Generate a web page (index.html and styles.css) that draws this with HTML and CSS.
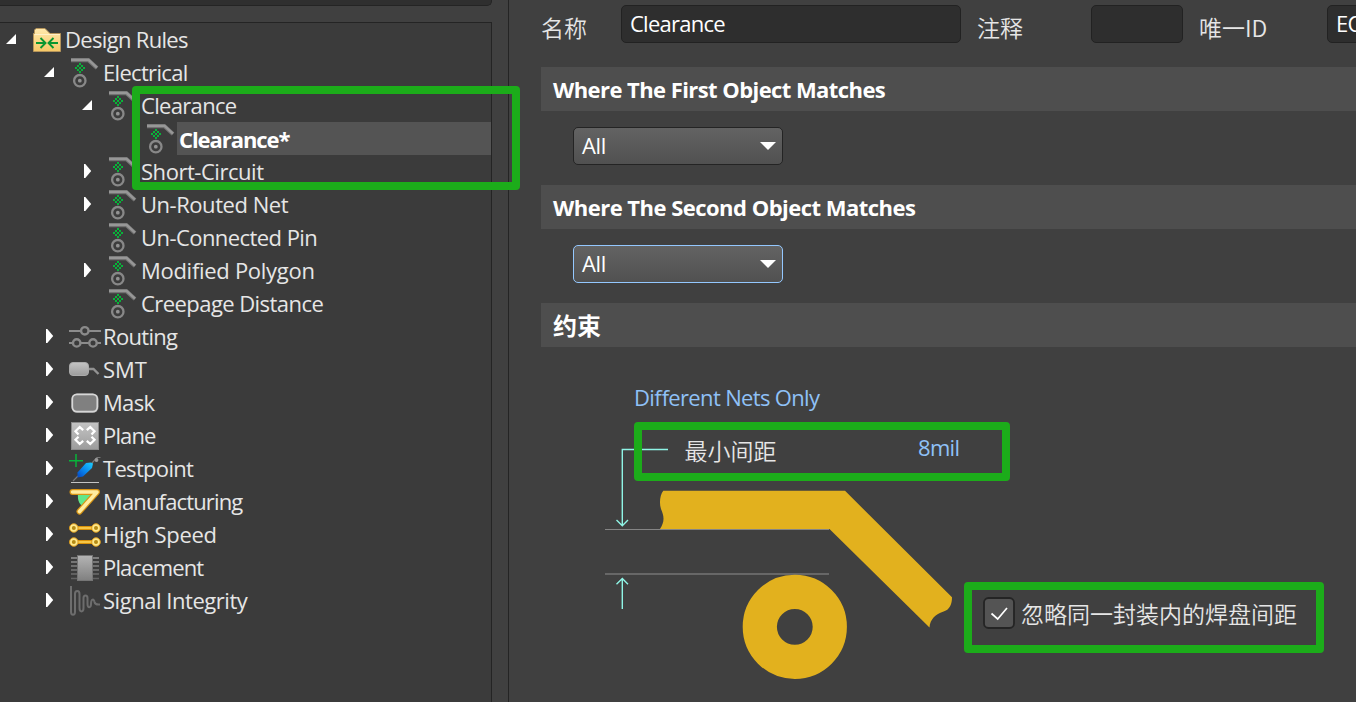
FILE: index.html
```
<!DOCTYPE html>
<html lang="zh-CN">
<head>
<meta charset="utf-8">
<title>Design Rules</title>
<link rel="stylesheet" href="styles.css">
</head>
<body>
<svg class="defs" width="0" height="0">
  <defs>
    <linearGradient id="gold" x1="0" y1="0" x2="0" y2="1"><stop offset="0" stop-color="#ffe9ae"/><stop offset="1" stop-color="#f6c866"/></linearGradient>
    <linearGradient id="grey" x1="0" y1="0" x2="0" y2="1"><stop offset="0" stop-color="#c4c4c4"/><stop offset="1" stop-color="#9c9c9c"/></linearGradient>
    <linearGradient id="dim" x1="0" y1="0" x2="0" y2="1"><stop offset="0" stop-color="#b4b4b4"/><stop offset="1" stop-color="#808080"/></linearGradient>
    <linearGradient id="pins" gradientUnits="userSpaceOnUse" x1="0" y1="4" x2="0" y2="30"><stop offset="0" stop-color="#9a9a9a"/><stop offset="1" stop-color="#5c5c5c"/></linearGradient>
    <linearGradient id="blue" x1="1" y1="0" x2="0" y2="1"><stop offset="0" stop-color="#1ed0ff"/><stop offset=".5" stop-color="#0a8cf0"/><stop offset="1" stop-color="#0546c4"/></linearGradient>
    <symbol id="open" viewBox="0 0 26 33"><path d="M1 21L11 11V21Z" fill="#fff"/></symbol>
    <symbol id="closed" viewBox="0 0 26 33"><path d="M3 9H4.3L10.2 16L4.3 23H3Z" fill="#fff"/></symbol>
    <symbol id="folder" viewBox="0 0 32 33">
      <path d="M2.5 28.500V10.500H3.500V7L5 5.500H14L19 10.500H29.500V28.500Z" fill="url(#gold)" stroke="#b5945a"/>
      <path d="M3.500 11.500H29" stroke="#fff0c8"/>
      <path d="M5 20H14M9.500 15L14.500 20L9.500 25M27 20H18M22.500 15L17.500 20L22.500 25" fill="none" stroke="#0a9630" stroke-width="1.900"/>
    </symbol>
    <symbol id="rule" viewBox="0 0 32 33">
      <path d="M2 4.200H19.500L28 12" fill="none" stroke="#727272" stroke-width="4"/>
      <path d="M2 3.800H19.500L28 11.600" fill="none" stroke="#979797" stroke-width="2.400"/>
      <g fill="#08b43a"><rect x="10" y="7" width="2" height="2"/><rect x="8" y="9" width="2" height="2"/><rect x="12" y="9" width="2" height="2"/><rect x="6" y="11" width="2" height="2"/><rect x="10" y="11" width="2" height="2"/><rect x="14" y="11" width="2" height="2"/><rect x="8" y="13" width="2" height="2"/><rect x="12" y="13" width="2" height="2"/><rect x="10" y="15" width="2" height="2"/></g>
      <circle cx="10.800" cy="24.700" r="5.700" fill="#3c3c3c" stroke="#888" stroke-width="2.300"/><circle cx="10.800" cy="24.700" r="1.900" fill="#929292"/>
    </symbol>
    <symbol id="routing" viewBox="0 0 32 33">
      <path d="M0 11H32M0 23H32" stroke="#8c8c8c" stroke-width="1.800"/>
      <g fill="#3b3b3b" stroke="#8a8a8a" stroke-width="2.400"><circle cx="15.800" cy="10.800" r="3.700"/><circle cx="7.700" cy="22.900" r="3.700"/><circle cx="24" cy="22.900" r="3.700"/></g>
    </symbol>
    <symbol id="smt" viewBox="0 0 32 33">
      <path d="M19 16H24.500L29.500 21" fill="none" stroke="#929292" stroke-width="2.400"/>
      <rect x=".5" y="9.500" width="19" height="13" rx="3.500" fill="url(#grey)" stroke="#aaa"/>
    </symbol>
    <symbol id="mask" viewBox="0 0 32 33">
      <rect x="2.300" y="7.500" width="27.400" height="19.500" rx="6" fill="#777"/><rect x="3.300" y="8.300" width="25" height="17.300" rx="4.500" fill="#808080" stroke="#d6d6d6" stroke-width="1.700"/>
    </symbol>
    <symbol id="plane" viewBox="0 0 32 33">
      <rect x="2.500" y="3.500" width="27" height="27" fill="url(#grey)" stroke="#8b8b8b"/>
      <path d="M14.200 11.200L10.700 8L6.500 12.200L9.500 15.500M17.800 11.200L21.300 8L25.500 12.200L22.500 15.500M14.200 21.800L10.700 25L6.500 20.800L9.500 17.800M17.800 21.800L21.300 25L25.500 20.800L22.500 17.800" fill="none" stroke="#fff" stroke-width="2.300"/>
    </symbol>
    <symbol id="probe" viewBox="0 0 32 33">
      <path d="M2 30.500H30" stroke="#c4c4c4"/><path d="M4 29L9 24M23 11L28 5.500H31.500" fill="none" stroke="#777" stroke-width="1.200"/>
      <circle cx="27.500" cy="8" r="1.900" fill="#999"/>
      <path d="M8.500 25.500V20.500L17 11L22 10.500L24 11.500L23 16L14 24.500Z" fill="url(#blue)"/>
      <path d="M0 8.700H14M7 2V15" stroke="#08b43a" stroke-width="1.500"/>
    </symbol>
    <symbol id="mfg" viewBox="0 0 32 33">
      <path d="M9 9H23L13 21C9.500 18 8.500 14 9 9Z" fill="#62e68a"/>
      <path d="M3.500 7H28L10.500 26.500" fill="none" stroke="#d99514" stroke-width="6" stroke-linecap="round" stroke-linejoin="round"/>
      <path d="M3.500 7H28L10.500 26.500" fill="none" stroke="#ffeca0" stroke-width="3.600" stroke-linecap="round" stroke-linejoin="round"/>
    </symbol>
    <symbol id="speed" viewBox="0 0 32 33">
      <path d="M5 10H27M5 24H27" stroke="#da9209" stroke-width="4"/><path d="M5 10H27M5 24H27" stroke="#ffd75b" stroke-width="1.500"/>
      <g fill="#ffe98c" stroke="#d99a1c"><circle cx="4.800" cy="10" r="4.300"/><circle cx="27" cy="10" r="4.300"/><circle cx="4.800" cy="24" r="4.300"/><circle cx="27" cy="24" r="4.300"/></g>
      <g fill="#b58b16"><circle cx="4.800" cy="10" r="2"/><circle cx="27" cy="10" r="2"/><circle cx="4.800" cy="24" r="2"/><circle cx="27" cy="24" r="2"/></g>
    </symbol>
    <symbol id="chip" viewBox="0 0 32 33">
      <path d="M2 6.200H30V7.800H2ZM2 10.200H30V11.800H2ZM2 14.200H30V15.800H2ZM2 18.200H30V19.800H2ZM2 22.200H30V23.800H2ZM2 26.700H30V28.300H2Z" fill="url(#pins)"/>
      <rect x="8.500" y="4.500" width="15" height="25" fill="url(#dim)" stroke="#757575"/>
    </symbol>
    <symbol id="wave" viewBox="0 0 32 33">
      <path d="M2 2V28C2 31.500 6 31.500 6 28V10C6 6 10.500 6 10.500 10V24C10.500 28.500 14.500 28.500 14.500 24V14C14.500 10.500 18.500 10.500 18.500 14V20C18.500 24.500 22 24 22 20C22 14.500 25 14.500 25.500 18C26 21 28 20.500 31 20.500" fill="none" stroke="#6d6d6d" stroke-width="2"/>
    </symbol>
  </defs>
</svg>

<main class="app">
  <aside class="side">
    <div class="filter"></div>
    <ul class="tree">
      <li class="row l0"><svg class="arrow"><use href="#open"/></svg><svg class="icon"><use href="#folder"/></svg><span class="label">Design Rules</span></li>
      <li class="row l1"><svg class="arrow"><use href="#open"/></svg><svg class="icon"><use href="#rule"/></svg><span class="label">Electrical</span></li>
      <li class="row l2"><svg class="arrow"><use href="#open"/></svg><svg class="icon"><use href="#rule"/></svg><span class="label">Clearance</span></li>
      <li class="row l3"><svg class="arrow"></svg><svg class="icon"><use href="#rule"/></svg><span class="label selected">Clearance*</span></li>
      <li class="row l2"><svg class="arrow"><use href="#closed"/></svg><svg class="icon"><use href="#rule"/></svg><span class="label medium">Short-Circuit</span></li>
      <li class="row l2"><svg class="arrow"><use href="#closed"/></svg><svg class="icon"><use href="#rule"/></svg><span class="label medium">Un-Routed Net</span></li>
      <li class="row l2"><svg class="arrow"></svg><svg class="icon"><use href="#rule"/></svg><span class="label snug">Un-Connected Pin</span></li>
      <li class="row l2"><svg class="arrow"><use href="#closed"/></svg><svg class="icon"><use href="#rule"/></svg><span class="label loose">Modified Polygon</span></li>
      <li class="row l2"><svg class="arrow"></svg><svg class="icon"><use href="#rule"/></svg><span class="label snug">Creepage Distance</span></li>
      <li class="row l1"><svg class="arrow"><use href="#closed"/></svg><svg class="icon"><use href="#routing"/></svg><span class="label">Routing</span></li>
      <li class="row l1"><svg class="arrow"><use href="#closed"/></svg><svg class="icon"><use href="#smt"/></svg><span class="label natural">SMT</span></li>
      <li class="row l1"><svg class="arrow"><use href="#closed"/></svg><svg class="icon"><use href="#mask"/></svg><span class="label">Mask</span></li>
      <li class="row l1"><svg class="arrow"><use href="#closed"/></svg><svg class="icon"><use href="#plane"/></svg><span class="label tight">Plane</span></li>
      <li class="row l1"><svg class="arrow"><use href="#closed"/></svg><svg class="icon"><use href="#probe"/></svg><span class="label">Testpoint</span></li>
      <li class="row l1"><svg class="arrow"><use href="#closed"/></svg><svg class="icon"><use href="#mfg"/></svg><span class="label tight">Manufacturing</span></li>
      <li class="row l1"><svg class="arrow"><use href="#closed"/></svg><svg class="icon"><use href="#speed"/></svg><span class="label loose">High Speed</span></li>
      <li class="row l1"><svg class="arrow"><use href="#closed"/></svg><svg class="icon"><use href="#chip"/></svg><span class="label tight">Placement</span></li>
      <li class="row l1"><svg class="arrow"><use href="#closed"/></svg><svg class="icon"><use href="#wave"/></svg><span class="label medium">Signal Integrity</span></li>
    </ul>
  </aside>

  <section class="detail">
    <header class="fields">
      <span class="caption name">名称</span><div class="input wide">Clearance</div>
      <span class="caption note">注释</span><div class="input small"></div>
      <span class="caption uid">唯一ID</span><div class="input id">EO</div>
    </header>
    <h2 class="band first">Where The First Object Matches</h2>
    <div class="select">All<svg class="caret" viewBox="0 0 16 8"><path d="M0 0H16L8 8Z" fill="#fff"/></svg></div>
    <h2 class="band second">Where The Second Object Matches</h2>
    <div class="select focused">All<svg class="caret" viewBox="0 0 16 8"><path d="M0 0H16L8 8Z" fill="#fff"/></svg></div>
    <h2 class="band cjk">约束</h2>
    <div class="constraint">
      <svg class="diagram" viewBox="541 347 815 355">
        <path d="M605 529.500H829" stroke="#858585"/>
        <path d="M605 574H829" stroke="#747474" stroke-width="1.500"/>
        <path d="M663.300 490.800H845L952 597.300C952 604 950 610 943 611.700C936 614 930 619 929.500 627.500L829.500 529H660C665 521 664 516 661 509C659 503 660 495 663.300 490.800Z" fill="#e2b11e"/>
        <circle cx="794.800" cy="626.800" r="35" fill="none" stroke="#e2b11e" stroke-width="34.200"/>
        <path d="M668 449.500H622.300V526M616.500 520L622.300 525.700L628 520M622.300 609V578.500M616.500 584.200L622.300 578.500L628 584.200" fill="none" stroke="#8ff5e6" stroke-width="1.400"/>
        <text class="link" x="634" y="405.500" textLength="186">Different Nets Only</text>
        <text class="zh" x="684.500" y="459.500">最小间距</text>
        <text class="link" x="918" y="456" textLength="42">8mil</text>
        <rect x="984" y="598" width="30" height="30" rx="4.500" fill="#545454" stroke="#242424" stroke-width="1.800"/>
        <path d="M991.500 613.500L997.700 619L1007 608" fill="none" stroke="#fff" stroke-width="1.700"/>
        <text class="zh" x="1021" y="622.500">忽略同一封装内的焊盘间距</text>
      </svg>
    </div>
  </section>
  <div class="mark tree-mark"></div>
  <div class="mark gap-mark"></div>
  <div class="mark pad-mark"></div>
</main>
</body>
</html>
```
FILE: styles.css
```
* { box-sizing: border-box; }
body { margin: 0; background: #404040; font: 22px "Open Sans", "Noto Sans CJK SC", sans-serif; color: #e6e6e6; overflow: hidden; }
.defs { position: absolute; }
.app { position: relative; display: flex; width: 1356px; height: 702px; overflow: hidden; }
.side { flex: none; width: 509px; border-right: 1px solid #242424; }
.filter { width: 492px; height: 6px; background: #2f2f2f; border: solid #242424; border-width: 0 1px 1px 0; border-radius: 0 0 5px 0; }
.tree { list-style: none; margin: 16px 0 0; padding: 0; width: 492px; height: 680px; background: #3b3b3b; border: solid #242424; border-width: 1px 1px 0 0; }
.row { display: flex; height: 33px; line-height: 33px; white-space: nowrap; }
.l0 { padding-left: 5px; }
.l1 { padding-left: 43px; }
.l2 { padding-left: 81px; }
.l3 { padding-left: 119px; }
.arrow { flex: none; width: 26px; height: 33px; }
.icon { flex: none; width: 32px; height: 33px; }
.label { flex: 1; padding-left: 2px; letter-spacing: -0.680px; }
.tight { letter-spacing: -0.850px; }
.snug { letter-spacing: -0.560px; }
.medium { letter-spacing: -0.460px; }
.loose { letter-spacing: -0.290px; }
.natural { letter-spacing: 0; }
.selected { background: #545454; color: #fff; font-weight: 700; letter-spacing: -1.060px; line-height: 35px; }
.detail { flex: 1; min-width: 0; padding-left: 32px; }
.fields { display: flex; height: 67px; padding-top: 5px; }
.caption { flex: none; font-size: 23px; line-height: 45px; height: 46px; font-family: "Noto Sans CJK SC", sans-serif; font-weight: 350; }
.name { width: 80px; }
.note { width: 130px; padding-left: 16px; }
.uid { width: 144px; padding-left: 16px; }
.input { flex: none; height: 38px; line-height: 35px; padding-left: 8px; color: #fff; background: #2e2e2e; border: 1.500px solid #222; border-radius: 5px; letter-spacing: -0.750px; }
.wide { width: 340px; }
.small { width: 92px; }
.id { width: 80px; }
.band { margin: 0; height: 44px; padding-left: 12px; line-height: 44px; background: #4e4e4e; color: #fff; font-size: 22px; font-weight: 700; letter-spacing: -0.570px; }
.second { letter-spacing: -0.520px; }
.cjk { font-size: 24px; line-height: 46px; letter-spacing: 0; }
.select { display: flex; align-items: center; justify-content: space-between; width: 210px; height: 38px; margin: 16px 0 20px 32px; padding: 0 6px 0 8px; line-height: 34px; color: #fff; background: linear-gradient(#636363, #515151); border: 1.500px solid #242424; border-radius: 5px; letter-spacing: -0.400px; }
.select { padding-bottom: 2px; }
.focused { border-color: #94c8ff; }
.caret { width: 16px; height: 8px; position: relative; top: 1px; }
.diagram { display: block; width: 815px; height: 355px; }
.link { fill: #8fc1f7; font-size: 22px; }
.zh { fill: #e6e6e6; font-size: 23px; font-family: "Noto Sans CJK SC", sans-serif; font-weight: 350; }
.mark { position: absolute; border: 8px solid #1cac1a; border-radius: 4px; }
.tree-mark { left: 132px; top: 86px; width: 388px; height: 104px; }
.gap-mark { left: 634px; top: 422px; width: 376px; height: 59px; }
.pad-mark { left: 964px; top: 582px; width: 360px; height: 71px; }
```
